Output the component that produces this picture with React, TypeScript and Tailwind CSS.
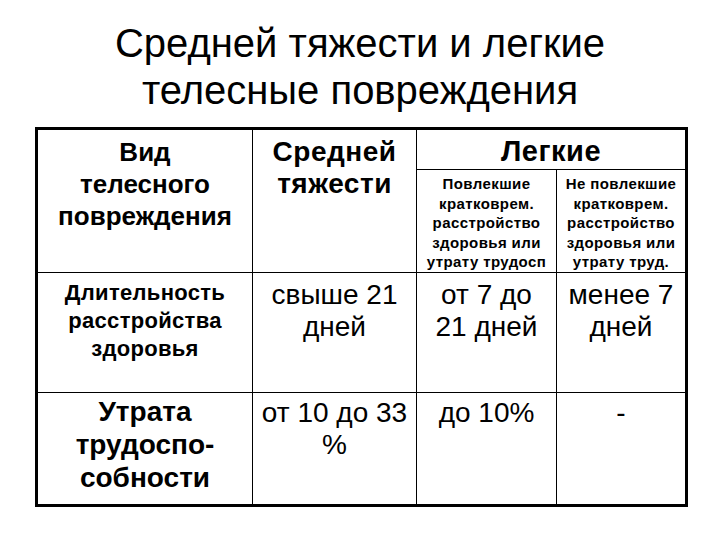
import * as React from "react"

const font = { fontFamily: '"Liberation Sans", Arial, sans-serif' }

export default function App() {
  return (
    <div className="w-[720px] h-[540px] bg-white text-black overflow-hidden" style={font}>
      <h1 className="pt-[20px] text-center text-[40px] leading-[47px] font-normal">
        Средней тяжести и легкие
        <br />
        телесные повреждения
      </h1>
      <div className="pl-[35px] pt-[13px]">
        <table className="border-collapse border-[3px] border-black w-[650px] table-fixed">
          <colgroup>
            <col className="w-[216px]" />
            <col className="w-[164px]" />
            <col className="w-[140px]" />
            <col className="w-[130px]" />
          </colgroup>
          <tbody>
            <tr className="h-[41px]">
              <td rowSpan={2} className="border border-black align-top text-center font-bold text-[26px] leading-[32px] pt-[6px]">
                Вид
                <br />
                телесного
                <br />
                повреждения
              </td>
              <td rowSpan={2} className="border border-black align-top text-center font-bold text-[28px] leading-[32px] pt-[6px] tracking-[0.5px]">
                Средней
                <br />
                тяжести
              </td>
              <td colSpan={2} className="border border-black text-center font-bold text-[29px] leading-[32px] pt-[2px] tracking-[0.5px]">
                Легкие
              </td>
            </tr>
            <tr className="h-[103px]">
              <td className="border border-black align-top text-center font-bold text-[15px] leading-[19.5px] pt-[4px] tracking-[0.4px]">
                Повлекшие
                <br />
                кратковрем.
                <br />
                расстройство
                <br />
                здоровья или
                <br />
                утрату трудосп
              </td>
              <td className="border border-black align-top text-center font-bold text-[15px] leading-[19.5px] pt-[4px] tracking-[0.4px]">
                Не повлекшие
                <br />
                кратковрем.
                <br />
                расстройство
                <br />
                здоровья или
                <br />
                утрату труд.
              </td>
            </tr>
            <tr className="h-[120px]">
              <td className="border border-black align-top text-center font-bold text-[22px] leading-[28px] pt-[6px] tracking-[0.3px]">
                Длительность
                <br />
                расстройства
                <br />
                здоровья
              </td>
              <td className="border border-black align-top text-center text-[28px] leading-[32px] pt-[6px]">
                свыше 21
                <br />
                дней
              </td>
              <td className="border border-black align-top text-center text-[28px] leading-[32px] pt-[6px]">
                от 7 до
                <br />
                21 дней
              </td>
              <td className="border border-black align-top text-center text-[28px] leading-[32px] pt-[6px]">
                менее 7
                <br />
                дней
              </td>
            </tr>
            <tr className="h-[113px]">
              <td className="border border-black align-top text-center font-bold text-[28px] leading-[33px] pt-[2px]">
                Утрата
                <br />
                трудоспо-
                <br />
                собности
              </td>
              <td className="border border-black align-top text-center text-[28px] leading-[32px] pt-[4px]">
                от 10 до 33
                <br />%
              </td>
              <td className="border border-black align-top text-center text-[28px] leading-[32px] pt-[4px]">
                до 10%
              </td>
              <td className="border border-black align-top text-center text-[28px] leading-[32px] pt-[4px]">
                -
              </td>
            </tr>
          </tbody>
        </table>
      </div>
    </div>
  )
}
